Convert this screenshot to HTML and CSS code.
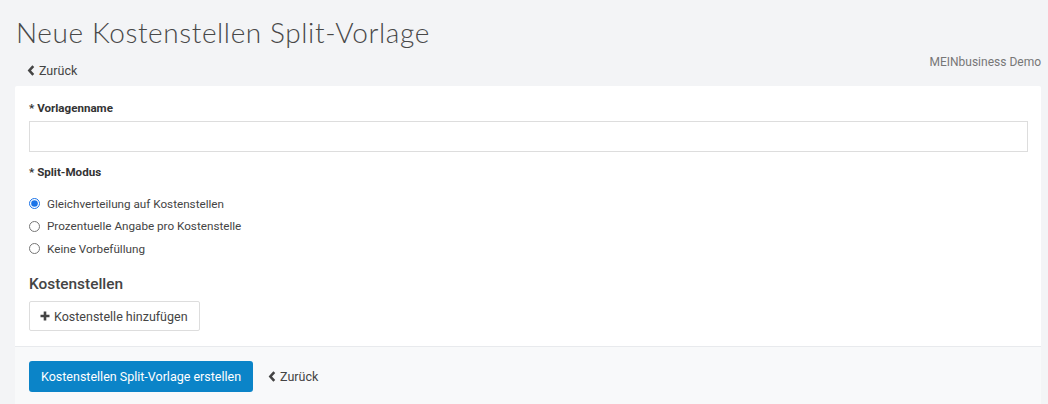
FILE: index.html
```html
<!DOCTYPE html>
<html lang="de">
<head>
<meta charset="utf-8">
<title>Neue Kostenstellen Split-Vorlage</title>
<link rel="stylesheet" href="styles.css">
</head>
<body>
<div class="page">
  <h1 class="page-title">Neue Kostenstellen Split-Vorlage</h1>
  <div class="topbar">
    <a class="back-link" href="#"><svg class="chev" viewBox="0 0 8 12" width="8" height="11"><path d="M6.5 1.2 L2.2 6 L6.5 10.8" fill="none" stroke="currentColor" stroke-width="2.8"/></svg>Zurück</a>
    <span class="company">MEINbusiness Demo</span>
  </div>
  <div class="card">
    <div class="card-body">
      <label class="field-label">* Vorlagenname</label>
      <input class="text-input" type="text">
      <div class="field-label mode-label">* Split-Modus</div>
      <div class="radios">
        <label class="radio"><input type="radio" name="mode" checked><span>Gleichverteilung auf Kostenstellen</span></label>
        <label class="radio"><input type="radio" name="mode"><span>Prozentuelle Angabe pro Kostenstelle</span></label>
        <label class="radio"><input type="radio" name="mode"><span>Keine Vorbefüllung</span></label>
      </div>
      <h2 class="section-title">Kostenstellen</h2>
      <button class="btn-default" type="button"><svg class="plus" viewBox="0 0 10 10" width="10" height="10"><path d="M5 0.5 V9.5 M0.5 5 H9.5" stroke="currentColor" stroke-width="2.6"/></svg>Kostenstelle hinzufügen</button>
    </div>
    <div class="card-footer">
      <button class="btn-primary" type="button">Kostenstellen Split-Vorlage erstellen</button>
      <a class="back-link footer-back" href="#"><svg class="chev" viewBox="0 0 8 12" width="8" height="11"><path d="M6.5 1.2 L2.2 6 L6.5 10.8" fill="none" stroke="currentColor" stroke-width="2.8"/></svg>Zurück</a>
    </div>
  </div>
</div>
</body>
</html>
```

FILE: styles.css
```css
* { box-sizing: border-box; }
html, body { margin: 0; padding: 0; }
body {
  background: #f3f4f6;
  font-family: Roboto, "Liberation Sans", Arial, sans-serif;
  font-size: 12px;
  color: #333;
  width: 1048px;
  height: 404px;
  overflow: hidden;
}
.page {
  padding: 0 7px 0 15px;
}
.page-title {
  margin: 0;
  padding-top: 14px;
  font-family: Lato, "Open Sans", sans-serif;
  font-weight: 300;
  font-size: 28px;
  line-height: 36px;
  color: #484848;
  letter-spacing: 0.6px;
  margin-left: 1px;
}
.topbar {
  display: flex;
  justify-content: space-between;
  align-items: flex-start;
  height: 36px;
}
.back-link {
  color: #444;
  text-decoration: none;
  font-size: 12.5px;
  display: inline-flex;
  align-items: center;
  gap: 4px;
}
.topbar .back-link {
  margin-left: 12px;
  margin-top: 13px;
}
.chev { display: block; }
.company {
  font-size: 12px;
  color: #777;
  margin-top: 5px;
}
.card {
  background: #fff;
  border-radius: 2px;
  width: 1026px;
  height: 330px;
  display: flex;
  flex-direction: column;
}
.card-body {
  padding: 15px 12px 15px 14px;
  display: flex;
  flex-direction: column;
  align-items: flex-start;
}
.field-label {
  font-weight: 700;
  font-size: 11.6px;
  color: #333;
  line-height: 15px;
}
.text-input {
  width: 999px;
  height: 31px;
  margin-top: 5px;
  border: 1px solid #ddd;
  border-radius: 0;
  background: #fff;
}
.mode-label {
  margin-top: 13px;
}
.radios {
  margin-top: 15px;
  display: flex;
  flex-direction: column;
  gap: 5.5px;
}
.radio {
  display: flex;
  align-items: center;
  height: 17px;
  color: #444;
  font-size: 11.7px;
}
.radio input {
  margin: 0 7px 0 0;
  width: 11px;
  height: 11px;
  accent-color: #1a73e8;
}
.section-title {
  margin: 18px 0 0;
  font-size: 15.4px;
  font-weight: 500;
  color: #444;
  line-height: 18px;
}
.btn-default {
  margin-top: 8px;
  height: 30px;
  padding: 0 11px 0 10px;
  background: #fff;
  border: 1px solid #ddd;
  border-radius: 2px;
  font-family: inherit;
  font-size: 12.5px;
  color: #444;
  display: inline-flex;
  align-items: center;
  gap: 4px;
}
.plus { display: block; color: #444; }
.card-footer {
  flex: 1;
  background: #f8f9fa;
  border-top: 1px solid #e8eaed;
  padding: 14px 14px;
  display: flex;
  align-items: flex-start;
  gap: 15px;
}
.btn-primary {
  height: 31px;
  padding: 0 12px;
  background: #0b84c8;
  color: #fff;
  border: none;
  border-radius: 3px;
  font-family: inherit;
  font-size: 12.5px;
}
.footer-back {
  margin-top: 8px;
}
```
